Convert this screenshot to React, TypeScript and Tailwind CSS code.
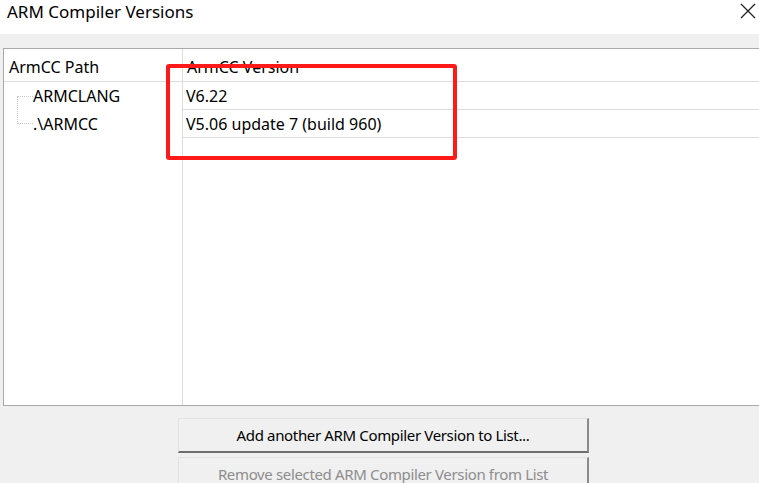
import React from "react";

export default function App() {
  const font = { fontFamily: '"Noto Sans", "Open Sans", sans-serif' };
  return (
    <div
      className="relative w-[759px] h-[483px] overflow-hidden bg-[#f0f0f0] text-black"
      style={font}
    >
      {/* Title bar */}
      <div className="h-[34px] bg-white flex items-center justify-between pl-[7px] pr-[2px]">
        <span className="text-[17px] leading-none -mt-[12px]">ARM Compiler Versions</span>
        <svg width="18" height="18" viewBox="0 0 18 18" className="-mt-[12px]">
          <path d="M2 2 L16 16 M16 2 L2 16" stroke="#222" strokeWidth="1.3" />
        </svg>
      </div>

      {/* List box */}
      <div className="pt-[14px] pl-[3px]">
        <div className="h-[358px] bg-white border-l border-t border-b border-[#a9a9a9] flex">
          <div className="w-[179px] border-r border-[#dcdcdc] flex flex-col">
            <div className="h-[33px] border-b border-[#dcdcdc] flex items-center pt-[4px] pl-[5px] text-[16px]">
              ArmCC Path
            </div>
            <div className="relative">
              <div className="h-[28px] flex items-center pl-[29px] text-[16px]">ARMCLANG</div>
              <div className="h-[28px] flex items-center pl-[29px] text-[16px]">.\ARMCC</div>
              <div className="absolute left-[13px] top-[14px] w-[16px] h-[28px] border-l border-t border-b border-dotted border-[#c8c8c8]" />
            </div>
          </div>
          <div className="flex-1 flex flex-col">
            <div className="h-[33px] border-b border-[#dcdcdc] flex items-center pt-[4px] pl-[4px] text-[16px]">
              ArmCC Version
            </div>
            <div className="h-[28px] border-b border-[#dcdcdc] flex items-center pl-[3px] text-[16px]">V6.22</div>
            <div className="h-[28px] border-b border-[#dcdcdc] flex items-center pl-[3px] text-[16px]">
              V5.06 update 7 (build 960)
            </div>
          </div>
        </div>
      </div>

      {/* Buttons */}
      <div className="ml-[178px] mt-[12px] w-[411px] flex flex-col gap-[4px]">
        <div className="h-[35px] bg-[#f0f0f0] border-t border-l border-[#e3e3e3] border-b-2 border-b-[#6e6e6e] border-r-2 border-r-[#8a8a8a] flex items-center justify-center text-[15px] tracking-[-0.35px]">
          Add another ARM Compiler Version to List...
        </div>
        <div className="h-[35px] bg-[#f0f0f0] border-t border-l border-[#e3e3e3] border-b-2 border-b-[#6e6e6e] border-r-2 border-r-[#8a8a8a] flex items-start pt-[5px] justify-center text-[15px] tracking-[-0.35px] text-[#8d8d8d]">
          Remove selected ARM Compiler Version from List
        </div>
      </div>

      {/* Red annotation box */}
      <div className="absolute left-[166px] top-[64px] w-[291px] h-[96px] border-[4px] border-[#ff1a1a] rounded-[3px]" />
    </div>
  );
}
